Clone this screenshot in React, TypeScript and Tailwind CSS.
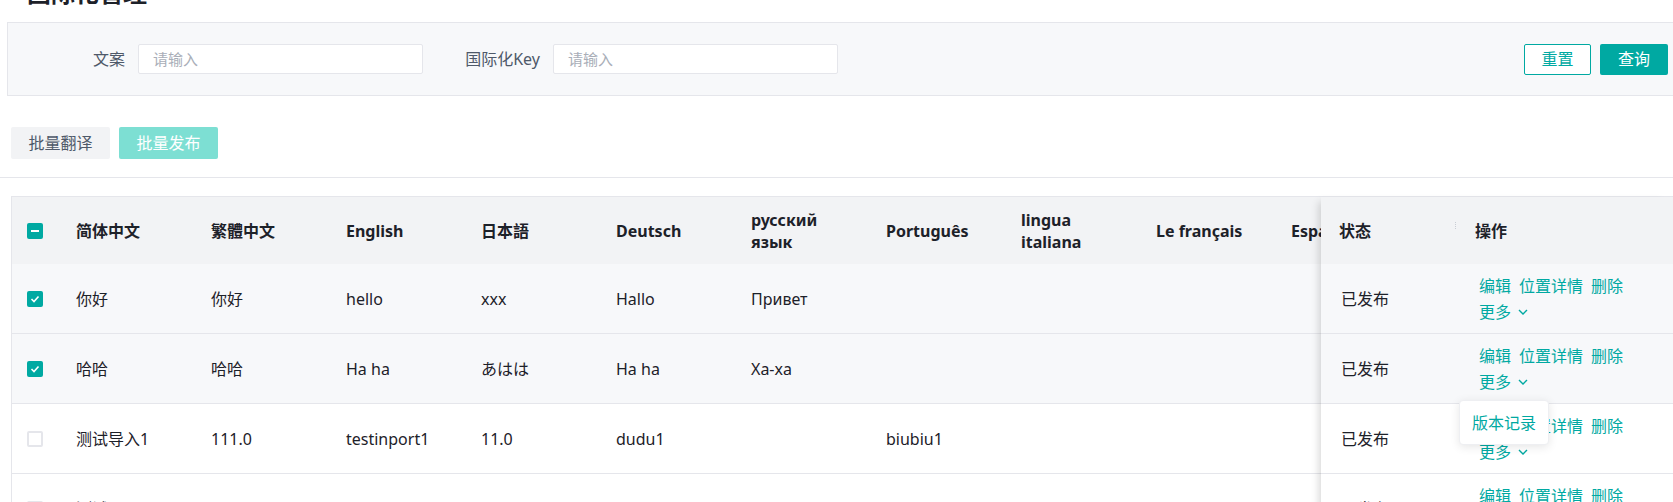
import React from 'react';

const FONT = '"Noto Sans", "Noto Sans CJK SC", sans-serif';

type CbState = 'checked' | 'indeterminate' | 'unchecked';

function Checkbox({ state }: { state: CbState }) {
  if (state === 'unchecked') {
    return <div className="w-[16px] h-[16px] rounded-[2px] border-2 border-[#e5e6eb] bg-white" />;
  }
  return (
    <div className="w-[16px] h-[16px] rounded-[2px] bg-[#00a9a2] flex items-center justify-center">
      {state === 'checked' ? (
        <svg width="10" height="8" viewBox="0 0 10 8">
          <polyline points="1.5,4 4,6.5 8.5,1.5" fill="none" stroke="#ffffff" strokeWidth="1.6" />
        </svg>
      ) : (
        <div className="w-[8px] h-[2px] bg-white" />
      )}
    </div>
  );
}

const headers: string[][] = [
  ['简体中文'],
  ['繁體中文'],
  ['English'],
  ['日本語'],
  ['Deutsch'],
  ['русский', 'язык'],
  ['Português'],
  ['lingua', 'italiana'],
  ['Le français'],
  ['Español'],
];

type Row = { state: CbState; bg: string; cells: string[] };

const rows: Row[] = [
  { state: 'checked', bg: 'bg-[#f7f8fa]', cells: ['你好', '你好', 'hello', 'xxx', 'Hallo', 'Привет', '', '', '', ''] },
  { state: 'checked', bg: 'bg-[#f7f8fa]', cells: ['哈哈', '哈哈', 'Ha ha', 'あはは', 'Ha ha', 'Xa-xa', '', '', '', ''] },
  { state: 'unchecked', bg: 'bg-white', cells: ['测试导入1', '111.0', 'testinport1', '11.0', 'dudu1', '', 'biubiu1', '', '', ''] },
  { state: 'unchecked', bg: 'bg-white', cells: ['测试导入2', '222.0', 'testinport2', '22.0', 'dudu2', '', 'biubiu2', '', '', ''] },
];

function Chevron() {
  return (
    <svg width="10" height="6" viewBox="0 0 10 6" className="ml-[7px]">
      <polyline points="1,1 5,5 9,1" fill="none" stroke="#00a9a2" strokeWidth="1.4" />
    </svg>
  );
}

function Actions({ dropdown }: { dropdown?: boolean }) {
  return (
    <div className="relative h-full w-full pl-[20px] flex flex-col justify-center text-[#00a9a2] leading-[26px]">
      <div className="flex gap-[8px]">
        <span>编辑</span>
        <span>位置详情</span>
        <span>删除</span>
      </div>
      <div className="flex items-center">
        <span>更多</span>
        <Chevron />
      </div>
      {dropdown && (
        <div className="absolute left-0 top-[66px] z-20 w-[90px] h-[45px] rounded-[4px] bg-white border border-[#eeeff2] shadow-[0_2px_10px_rgba(0,0,0,0.10)] flex items-center justify-center text-[#00a9a2] text-[16px]">
          版本记录
        </div>
      )}
    </div>
  );
}

export default function App() {
  return (
    <div
      className="w-[1673px] h-[502px] overflow-hidden bg-white relative text-[16px] text-[#1d2129]"
      style={{ fontFamily: FONT }}
    >
      {/* title (scrolled, cut off) */}
      <div className="-mt-[19px] h-[24px] leading-[24px] pl-[27px] text-[24px] font-bold text-[#1d2129]">
        国际化管理
      </div>

      {/* search panel */}
      <div className="mt-[17px] ml-[7px] h-[74px] border border-r-0 border-[#e5e6eb] bg-[#f7f8fa] flex items-center pl-[17px] pr-[5px]">
        <div className="flex items-center">
          <div className="w-[113px] pr-[13px] text-right text-[#4e5969]">文案</div>
          <div className="w-[285px] h-[30px] bg-white border border-[#e5e6eb] rounded-[2px] pl-[14px] flex items-center text-[15px] text-[#a9aeb8]">
            请输入
          </div>
        </div>
        <div className="flex items-center ml-[17px]">
          <div className="w-[113px] pr-[13px] text-right text-[#4e5969]">国际化Key</div>
          <div className="w-[285px] h-[30px] bg-white border border-[#e5e6eb] rounded-[2px] pl-[14px] flex items-center text-[15px] text-[#a9aeb8]">
            请输入
          </div>
        </div>
        <div className="ml-auto flex gap-[9px]">
          <div className="w-[67px] h-[31px] rounded-[2px] border border-[#00a9a2] bg-white text-[#00a9a2] flex items-center justify-center">
            重置
          </div>
          <div className="w-[68px] h-[31px] rounded-[2px] bg-[#00a9a2] text-white flex items-center justify-center">
            查询
          </div>
        </div>
      </div>

      {/* batch buttons */}
      <div className="mt-[31px] ml-[11px] flex gap-[9px]">
        <div className="w-[99px] h-[32px] rounded-[2px] bg-[#f2f3f5] text-[#4e5969] flex items-center justify-center">
          批量翻译
        </div>
        <div className="w-[99px] h-[32px] rounded-[2px] bg-[#7ddfd3] text-white flex items-center justify-center">
          批量发布
        </div>
      </div>

      <div className="mt-[18px] h-px bg-[#e5e6eb]" />

      {/* table */}
      <div className="mt-[18px] ml-[11px] border-l border-t border-[#e5e6eb] flex">
        {/* scrolling part */}
        <div className="flex-1 min-w-0 overflow-hidden">
          <div className="flex h-[67px] bg-[#f2f3f5] font-bold w-max">
            <div className="w-[48px] shrink-0 pl-[15px] flex items-center">
              <Checkbox state="indeterminate" />
            </div>
            {headers.map((h, i) => (
              <div key={i} className="w-[135px] shrink-0 pl-[16px] pr-[8px] flex flex-col justify-center leading-[22px]">
                {h.map((line, j) => (
                  <div key={j} className="whitespace-nowrap">{line}</div>
                ))}
              </div>
            ))}
          </div>
          {rows.map((r, ri) => (
            <div key={ri} className={`flex h-[70px] border-b border-[#e5e6eb] w-max ${r.bg}`}>
              <div className="w-[48px] shrink-0 pl-[15px] flex items-center">
                <Checkbox state={r.state} />
              </div>
              {r.cells.map((c, ci) => (
                <div key={ci} className="w-[135px] shrink-0 pl-[16px] flex items-center whitespace-nowrap">
                  {c}
                </div>
              ))}
            </div>
          ))}
        </div>

        {/* fixed right part */}
        <div className="w-[352px] shrink-0 relative z-10 shadow-[-7px_0_8px_-5px_rgba(0,0,0,0.16)]">
          <div className="flex h-[67px] bg-[#f2f3f5] font-bold">
            <div className="relative w-[138px] shrink-0 pl-[18px] flex items-center">
              状态
              <div className="absolute left-[134px] top-[25px] h-[7px] border-l border-dotted border-[#c9cdd4]" />
            </div>
            <div className="flex-1 pl-[16px] flex items-center">操作</div>
          </div>
          {rows.map((r, ri) => (
            <div key={ri} className={`flex h-[70px] border-b border-[#e5e6eb] ${r.bg}`}>
              <div className="w-[138px] shrink-0 pl-[20px] flex items-center">已发布</div>
              <div className="flex-1">
                <Actions dropdown={ri === 1} />
              </div>
            </div>
          ))}
        </div>
      </div>
    </div>
  );
}
